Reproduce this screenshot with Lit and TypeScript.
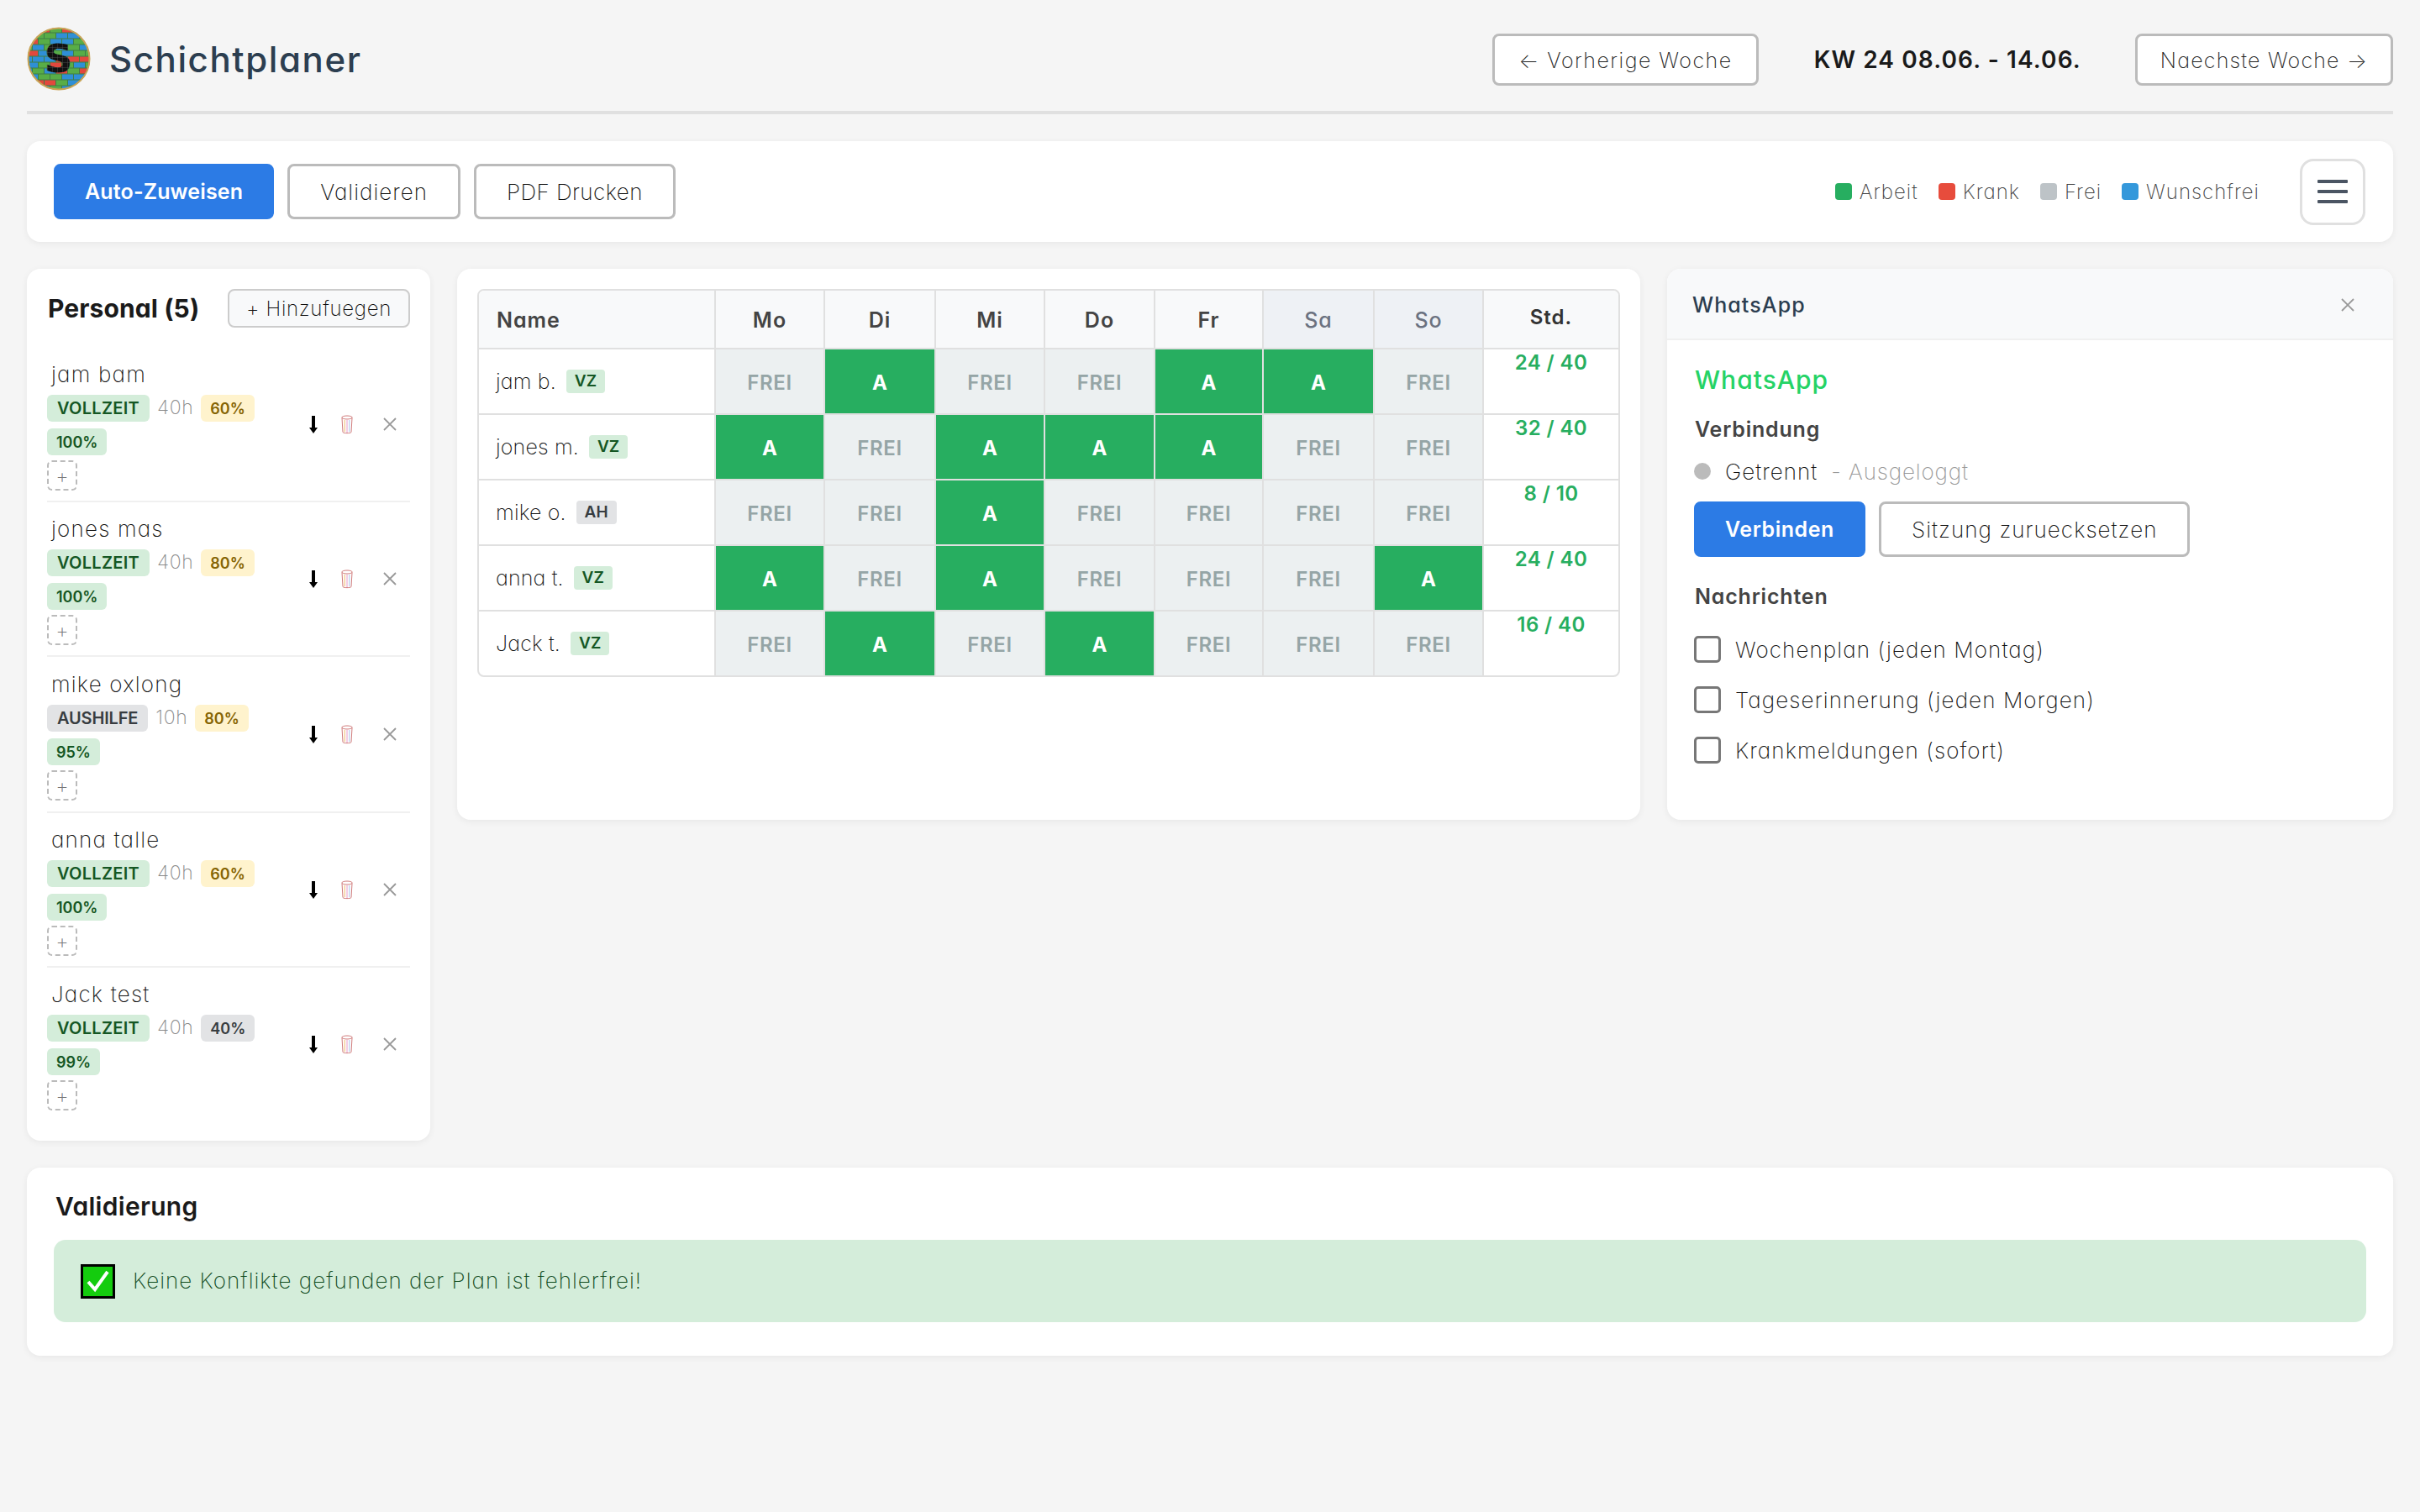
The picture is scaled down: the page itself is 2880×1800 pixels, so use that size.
import { LitElement, html, css, svg } from "lit";
import { customElement } from "lit/decorators.js";

type Person = { name: string; short: string; kind: "VOLLZEIT" | "AUSHILFE"; code: "VZ" | "AH"; hours: string; a: string; aClass: string; b: string; days: number[]; total: string };

const people: Person[] = [
  { name: "jam bam", short: "jam b.", kind: "VOLLZEIT", code: "VZ", hours: "40h", a: "60%", aClass: "yellow", b: "100%", days: [0, 1, 0, 0, 1, 1, 0], total: "24 / 40" },
  { name: "jones mas", short: "jones m.", kind: "VOLLZEIT", code: "VZ", hours: "40h", a: "80%", aClass: "yellow", b: "100%", days: [1, 0, 1, 1, 1, 0, 0], total: "32 / 40" },
  { name: "mike oxlong", short: "mike o.", kind: "AUSHILFE", code: "AH", hours: "10h", a: "80%", aClass: "yellow", b: "95%", days: [0, 0, 1, 0, 0, 0, 0], total: "8 / 10" },
  { name: "anna talle", short: "anna t.", kind: "VOLLZEIT", code: "VZ", hours: "40h", a: "60%", aClass: "yellow", b: "100%", days: [1, 0, 1, 0, 0, 0, 1], total: "24 / 40" },
  { name: "Jack test", short: "Jack t.", kind: "VOLLZEIT", code: "VZ", hours: "40h", a: "40%", aClass: "grey", b: "99%", days: [0, 1, 0, 1, 0, 0, 0], total: "16 / 40" },
];

const dayNames = ["Mo", "Di", "Mi", "Do", "Fr", "Sa", "So"];
const colWidths = [281, 130, 132, 130, 131, 129, 132, 130, 161];

function bricks() {
  const colours = ["#e2483d", "#2f8fd6", "#58ad47", "#2f8fd6", "#58ad47", "#e2483d", "#58ad47", "#2f8fd6"];
  const out = [];
  let seed = 7;
  for (let r = 0; r < 11; r++) {
    const off = r % 2 ? -7 : -14;
    for (let c = 0; c < 7; c++) {
      seed = (seed * 31 + 11) % 101;
      const col = colours[seed % colours.length];
      out.push(svg`<rect x=${off + c * 14} y=${r * 7 + 0.5} width="13" height="6" fill=${col}></rect>`);
    }
  }
  return out;
}

@customElement("app-root")
export class AppRoot extends LitElement {
  static styles = css`
    :host {
      display: block;
      box-sizing: border-box;
      min-height: 1800px;
      padding: 32px;
      background: #f5f5f5;
      color: #111;
      font-family: Inter, "Noto Sans", sans-serif;
      font-feature-settings: "cv11", "ss03";
      font-weight: 200;
      font-size: 26px;
    }
    * { box-sizing: border-box; }
    button { font: inherit; font-feature-settings: inherit; color: inherit; cursor: pointer; }

    .header { display: flex; align-items: center; justify-content: space-between; padding-bottom: 24px; border-bottom: 4px solid #e0e0e0; margin-bottom: 32px; }
    .brand { display: flex; align-items: center; gap: 22px; }
    .logo { width: 76px; height: 76px; display: block; }
    .title { font-size: 42px; font-weight: 500; color: #2c3e50; letter-spacing: 1.6px; }
    .week { display: flex; align-items: center; margin-top: 2px; }
    .week-label { font-size: 28px; font-weight: 600; color: #1a1a1a; letter-spacing: 1.1px; margin: 0 64px 0 66px; }

    .btn { height: 66px; border-radius: 8px; border: 3px solid #bbb; background: #fff; padding: 0 36px; font-size: 26px; letter-spacing: 1px; white-space: nowrap; color: #111; }
    .btn.tight { letter-spacing: 0.45px; }
    .btn.reset { letter-spacing: 1.05px; }
    .btn.nav { height: 62px; padding: 2px 28px 0; font-size: 25px; letter-spacing: 1.5px; color: #222; }
    .btn.nav.next { padding: 2px 27px 0; letter-spacing: 1.2px; }
    .btn.primary { background: #2c7be5; border-color: #2c7be5; color: #fff; font-size: 25px; font-weight: 600; letter-spacing: 0.15px; padding: 0 34px; }
    .btn.primary.connect { letter-spacing: 0.55px; }

    .card { background: #fff; border-radius: 16px; box-shadow: 0 2px 8px rgba(0, 0, 0, 0.06); }

    .toolbar { display: flex; align-items: center; justify-content: space-between; padding: 20px 33px 20px 32px; height: 120px; margin-bottom: 32px; }
    .actions { display: flex; gap: 16px; }
    .toolbar-right { display: flex; align-items: center; gap: 48px; }
    .legend { display: flex; gap: 24px; color: #444; font-size: 24px; letter-spacing: 1px; }
    .legend-item { display: flex; align-items: center; gap: 9px; }
    .swatch { width: 20px; height: 20px; border-radius: 4px; }
    .menu { width: 78px; height: 79px; border: 3px solid #e0e0e0; border-radius: 16px; background: #fff; display: flex; flex-direction: column; align-items: center; justify-content: center; gap: 8px; padding: 0; }
    .menu span { width: 36px; height: 4px; background: #4b5563; border-radius: 1px; }

    .main { display: flex; gap: 32px; align-items: flex-start; margin-bottom: 32px; }
    .side { width: 480px; flex: none; padding: 24px; }
    .side-head { display: flex; align-items: center; justify-content: space-between; height: 46px; margin-bottom: 24px; padding-left: 1px; }
    .side-title { font-size: 30px; font-weight: 700; color: #1a1a1a; letter-spacing: 0.1px; }
    .add { height: 46px; padding: 0 20px; background: #f8f9fa; border: 2px solid #ccc; border-radius: 8px; font-size: 24px; letter-spacing: 0.7px; color: #111; white-space: nowrap; }

    .person { display: flex; align-items: center; padding: 12px 0; border-bottom: 2px solid #f0f0f0; height: 184px; }
    .person:nth-child(4) { height: 186px; }
    .person:last-child { border-bottom: 0; height: 182px; }
    .info { width: 286px; flex: none; }
    .pname { font-size: 26px; line-height: 40px; height: 32px; padding-left: 5px; letter-spacing: 1.2px; margin-bottom: 12px; color: #111; }
    .meta { display: flex; flex-wrap: wrap; align-items: center; gap: 8px 9px; }
    .badge { height: 32px; display: inline-flex; align-items: center; padding: 0 12px; border-radius: 6px; font-size: 20px; font-weight: 600; letter-spacing: 0.3px; }
    .badge.grey { letter-spacing: -0.15px; }
    .badge.pct { font-size: 18px; letter-spacing: 0; padding: 0 11px; }
    .green { background: #d4edda; color: #155724; }
    .yellow { background: #fff3cd; color: #856404; }
    .grey { background: #e2e3e5; color: #383d41; }
    .hours { font-size: 23px; color: #888; letter-spacing: 0.6px; position: relative; top: -1px; }
    .plus { display: flex; align-items: center; justify-content: center; width: 36px; height: 36px; margin-top: 6px; border: 2px dashed #bbb; border-radius: 6px; color: #777; font-size: 24px; }
    .person-actions { display: flex; align-items: center; margin-left: 19px; }
    .icon-box { width: 24px; display: flex; justify-content: center; }
    .icon-box.trash { margin-left: 16px; }
    .icon-box.close { margin-left: 27px; }

    .right { flex: 1; display: grid; grid-template-columns: 1408px 864px; gap: 32px; }
    .plan { padding: 24px; height: 656px; }
    .table-wrap { border: 2px solid #e0e0e0; border-radius: 8px; overflow: hidden; width: 1360px; }
    table { border-collapse: collapse; table-layout: fixed; width: 1356px; }
    th, td { border: 2px solid #e0e0e0; padding: 0; text-align: center; }
    tr > :first-child { border-left: 0; }
    tr > :last-child { border-right: 0; }
    thead th { border-top: 0; }
    tbody tr:last-child td { border-bottom: 0; height: 77px; }
    th { height: 69px; background: #f8f9fa; color: #444; font-size: 25px; font-weight: 600; letter-spacing: 1px; padding-top: 2px; }
    th.name { text-align: left; padding-left: 21px; }
    th.weekend { background: #eef1f5; color: #6b7280; font-weight: 500; }
    th.std { vertical-align: top; padding-top: 17px; color: #333; font-size: 24px; }
    td { height: 78px; }
    td.name { text-align: left; padding-left: 20px; font-size: 25px; letter-spacing: 0.15px; color: #111; white-space: nowrap; }
    .mini { display: inline-flex; align-items: center; height: 28px; padding: 0 10px; border-radius: 4px; font-size: 19px; font-weight: 600; margin-left: 12px; vertical-align: 3px; }
    td.free { background: #ecf0f1; color: #95a5a6; font-size: 24px; font-weight: 600; letter-spacing: 0.6px; padding-top: 3px; }
    td.work { background: #27ae60; color: #fff; font-size: 24px; font-weight: 700; border-color: #e0e0e0; padding-top: 3px; }
    td.std { vertical-align: top; padding-top: 1px; color: #27ae60; font-size: 24px; font-weight: 600; letter-spacing: 0.4px; }

    .wa { height: 656px; overflow: hidden; }
    .wa-head { height: 85px; background: #f8f9fa; border-bottom: 2px solid #f0f0f0; display: flex; align-items: center; justify-content: space-between; padding: 2px 46px 0 30px; font-size: 25px; font-weight: 500; color: #2c3e50; letter-spacing: 1.1px; }
    .wa-body { padding: 0 32px; }
    .wa-title { color: #25d366; font-size: 30px; font-weight: 500; letter-spacing: 1px; margin: 26px 0 0 1px; line-height: 42px; }
    .wa-label { font-size: 25px; font-weight: 600; color: #444; letter-spacing: 0.8px; margin-left: 1px; line-height: 32px; }
    .wa-label.first { margin-top: 22px; }
    .status { display: flex; align-items: center; margin: 18px 0 20px; height: 32px; letter-spacing: 1px; font-size: 26px; }
    .dot { width: 20px; height: 20px; border-radius: 50%; background: #bbb; margin-right: 17px; }
    .muted { color: #999; margin-left: 16px; letter-spacing: 0.85px; }
    .wa-actions { display: flex; gap: 16px; margin-bottom: 31px; }
    .check { display: flex; align-items: center; height: 32px; margin-bottom: 28px; gap: 17px; font-size: 26px; letter-spacing: 1.1px; color: #111; }
    .box { width: 32px; height: 32px; border: 3px solid #777; border-radius: 5px; background: #fff; flex: none; }
    .checks { margin-top: 31px; }

    .validate { padding: 32px; height: 224px; }
    .val-title { font-size: 30px; font-weight: 600; color: #1a1a1a; letter-spacing: 0.3px; line-height: 36px; margin: -4px 0 22px 2px; }
    .banner { display: flex; align-items: center; gap: 21px; height: 98px; padding: 0 32px 0; background: #d4edda; border-radius: 14px; color: #0f4a1c; font-size: 26px; letter-spacing: 1.02px; }
    .banner span { position: relative; top: -1px; }
    .okicon { width: 41px; height: 41px; display: block; flex: none; }
  `;

  private logo() {
    return html`<svg class="logo" viewBox="0 0 76 76" role="img" aria-label="Logo">
      <defs>
        <clipPath id="c"><circle cx="38" cy="38" r="36"></circle></clipPath>
        <pattern id="g" width="6" height="6" patternUnits="userSpaceOnUse">
          <rect width="6" height="6" fill="#111"></rect>
          <path d="M0 0H6M0 0V6" stroke="#666" stroke-width="0.6" fill="none"></path>
        </pattern>
      </defs>
      <circle cx="38" cy="38" r="37" fill="#3f7d45"></circle>
      <g clip-path="url(#c)">${bricks()}</g>
      <circle cx="38" cy="38" r="36.5" fill="none" stroke="#c9a456" stroke-width="2"></circle>
      <text x="37.5" y="54" text-anchor="middle" font-family="DejaVu Sans" font-weight="700" font-size="47" fill="url(#g)">S</text>
    </svg>`;
  }

  private arrow() {
    return html`<svg width="10" height="21" viewBox="0 0 10 21"><path d="M3 0H7V14H10L5 21L0 14H3Z" fill="#000"></path></svg>`;
  }

  private trash() {
    return html`<svg width="14" height="23" viewBox="0 0 14 23" fill="none" stroke="#d07a7a" stroke-width="1">
      <ellipse cx="7" cy="3" rx="6.2" ry="2"></ellipse>
      <path d="M1 3.5L2 20.5C3 22 11 22 12 20.5L13 3.5"></path>
      <path d="M4.2 6V20" stroke="#eeb86a"></path><path d="M7 6V21" stroke="#e79ac8"></path><path d="M9.8 6V20" stroke="#a9c3e6"></path>
    </svg>`;
  }

  private cross(size = 16) {
    return html`<svg width=${size} height=${size} viewBox="0 0 16 16" fill="none" stroke="#999" stroke-width="1.8"><path d="M1 1L15 15M15 1L1 15"></path></svg>`;
  }

  render() {
    return html`
      <header class="header">
        <div class="brand">${this.logo()}<span class="title">Schichtplaner</span></div>
        <div class="week">
          <button class="btn nav">← Vorherige Woche</button>
          <span class="week-label">KW 24 08.06. - 14.06.</span>
          <button class="btn nav next">Naechste Woche →</button>
        </div>
      </header>

      <section class="card toolbar">
        <div class="actions">
          <button class="btn primary">Auto-Zuweisen</button>
          <button class="btn">Validieren</button>
          <button class="btn tight">PDF Drucken</button>
        </div>
        <div class="toolbar-right">
          <div class="legend">
            <span class="legend-item"><i class="swatch" style="background:#27ae60"></i>Arbeit</span>
            <span class="legend-item"><i class="swatch" style="background:#e74c3c"></i>Krank</span>
            <span class="legend-item"><i class="swatch" style="background:#bdc3c7"></i>Frei</span>
            <span class="legend-item"><i class="swatch" style="background:#3498db"></i>Wunschfrei</span>
          </div>
          <button class="menu" aria-label="Menü"><span></span><span></span><span></span></button>
        </div>
      </section>

      <div class="main">
        <aside class="card side">
          <div class="side-head">
            <span class="side-title">Personal (5)</span>
            <button class="add">+ Hinzufuegen</button>
          </div>
          ${people.map(
            (p) => html`<div class="person">
              <div class="info">
                <div class="pname">${p.name}</div>
                <div class="meta">
                  <span class="badge ${p.code === "VZ" ? "green" : "grey"}">${p.kind}</span>
                  <span class="hours">${p.hours}</span>
                  <span class="badge pct ${p.aClass}">${p.a}</span>
                  <span class="badge pct green">${p.b}</span>
                </div>
                <div class="plus">+</div>
              </div>
              <div class="person-actions">
                <div class="icon-box">${this.arrow()}</div>
                <div class="icon-box trash">${this.trash()}</div>
                <div class="icon-box close">${this.cross()}</div>
              </div>
            </div>`
          )}
        </aside>

        <div class="right">
          <section class="card plan">
            <div class="table-wrap">
              <table>
                <colgroup>${colWidths.map((w) => html`<col style="width:${w}px" />`)}</colgroup>
                <thead>
                  <tr>
                    <th class="name">Name</th>
                    ${dayNames.map((d, i) => html`<th class=${i > 4 ? "weekend" : ""}>${d}</th>`)}
                    <th class="std">Std.</th>
                  </tr>
                </thead>
                <tbody>
                  ${people.map(
                    (p) => html`<tr>
                      <td class="name">${p.short}<span class="mini ${p.code === "VZ" ? "green" : "grey"}">${p.code}</span></td>
                      ${p.days.map((d) => (d ? html`<td class="work">A</td>` : html`<td class="free">FREI</td>`))}
                      <td class="std">${p.total}</td>
                    </tr>`
                  )}
                </tbody>
              </table>
            </div>
          </section>

          <section class="card wa">
            <div class="wa-head"><span>WhatsApp</span>${this.cross(16)}</div>
            <div class="wa-body">
              <div class="wa-title">WhatsApp</div>
              <div class="wa-label first">Verbindung</div>
              <div class="status"><i class="dot"></i>Getrennt<span class="muted">- Ausgeloggt</span></div>
              <div class="wa-actions">
                <button class="btn primary connect">Verbinden</button>
                <button class="btn reset">Sitzung zuruecksetzen</button>
              </div>
              <div class="wa-label">Nachrichten</div>
              <div class="checks">
                <label class="check"><span class="box"></span>Wochenplan (jeden Montag)</label>
                <label class="check"><span class="box"></span>Tageserinnerung (jeden Morgen)</label>
                <label class="check"><span class="box"></span>Krankmeldungen (sofort)</label>
              </div>
            </div>
          </section>
        </div>
      </div>

      <section class="card validate">
        <div class="val-title">Validierung</div>
        <div class="banner">
          <svg class="okicon" viewBox="0 0 41 41"><rect x="1.5" y="1.5" width="38" height="38" fill="#14cc0e" stroke="#000" stroke-width="3"></rect><path d="M9 21L17 30L32 9" fill="none" stroke="#fff" stroke-width="4"></path></svg>
          <span>Keine Konflikte gefunden der Plan ist fehlerfrei!</span>
        </div>
      </section>
    `;
  }
}
